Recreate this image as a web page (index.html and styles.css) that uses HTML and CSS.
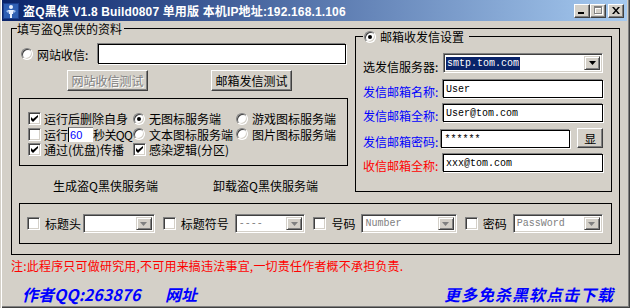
FILE: index.html
```html
<!DOCTYPE html>
<html lang="zh-CN">

<head>
    <meta charset="UTF-8">
    <title>盗Q黑侠</title>
    <link rel="stylesheet" href="styles.css">
</head>

<body>
    <div class="window">
        <div class="titlebar">
            <span class="app-icon">
                <svg width="16" height="16" viewBox="0 0 16 16">
                    <rect width="16" height="16" fill="#1b3f8f"/>
                    <rect x="1" y="1" width="14" height="14" fill="#2f5fb3"/>
                    <circle cx="8" cy="4" r="2" fill="#e8f0ff"/>
                    <path d="M5 7h6l-1 4h-1v4h-2v-4h-1z" fill="#e8f0ff"/>
                    <path d="M3 8l2-1v3zM13 8l-2-1v3z" fill="#9fc0f0"/>
                </svg>
            </span>
            <span class="title">盗Q黑侠 V1.8 Build0807 单用版 本机IP地址:192.168.1.106</span>
            <div class="title-btns">
                <span class="tbtn">
                    <svg width="8" height="7" viewBox="0 0 8 7"><rect x="0" y="5" width="6" height="2" fill="#000"/></svg>
                </span>
                <span class="tbtn">
                    <svg width="9" height="9" viewBox="0 0 9 9">
                        <path d="M1 1h8v8h-8z M2 3v5h6v-5z" fill="#fff"/>
                        <path d="M0 0h8v8h-8z M1 2v5h6v-5z" fill="#808080"/>
                    </svg>
                </span>
                <span class="tbtn close">
                    <svg width="8" height="7" viewBox="0 0 8 7">
                        <path d="M0 0h2l2 2.5 2-2.5h2l-3 3.5 3 3.5h-2l-2-2.5-2 2.5h-2l3-3.5z" fill="#000"/>
                    </svg>
                </span>
            </div>
        </div>

        <fieldset class="group main-group">
            <legend>填写盗Q黑侠的资料</legend>
            <div class="top-row">
                <div class="left-col">
                    <div class="site-row">
                        <span class="radio"></span>
                        <span class="site-label">网站收信:</span>
                        <input type="text" class="field site-url">
                    </div>
                    <div class="test-row">
                        <button class="btn" disabled>网站收信测试</button>
                        <button class="btn">邮箱发信测试</button>
                    </div>
                    <div class="box options">
                        <div class="opt-row">
                            <div class="cell c1"><span class="chk on"><svg width="7" height="7" viewBox="0 0 7 7"><path d="M0 2l2 2 5-4v2l-5 5-2-2z" fill="#000"/></svg></span>运行后删除自身</div>
                            <div class="cell c2"><span class="radio on"></span>无图标服务端</div>
                            <div class="cell"><span class="radio"></span>游戏图标服务端</div>
                        </div>
                        <div class="opt-row">
                            <div class="cell c1"><span class="chk"></span>运行<input type="text" class="secs" value="60"><span class="tight">秒关QQ</span></div>
                            <div class="cell c2"><span class="radio"></span>文本图标服务端</div>
                            <div class="cell"><span class="radio"></span>图片图标服务端</div>
                        </div>
                        <div class="opt-row">
                            <div class="cell c1"><span class="chk on"><svg width="7" height="7" viewBox="0 0 7 7"><path d="M0 2l2 2 5-4v2l-5 5-2-2z" fill="#000"/></svg></span>通过(优盘)传播</div>
                            <div class="cell c2"><span class="chk on"><svg width="7" height="7" viewBox="0 0 7 7"><path d="M0 2l2 2 5-4v2l-5 5-2-2z" fill="#000"/></svg></span>感染逻辑(分区)</div>
                        </div>
                    </div>
                    <div class="server-row">
                        <span class="make">生成盗Q黑侠服务端</span>
                        <span>卸载盗Q黑侠服务端</span>
                    </div>
                </div>

                <fieldset class="group mail-group">
                    <legend><span class="radio on"></span>邮箱收发信设置</legend>
                    <div class="mail-row first">
                        <span class="mail-label">选发信服务器:</span>
                        <div class="combo smtp">
                            <span class="combo-text"><span class="selected">smtp.tom.com</span></span>
                            <span class="drop"><svg width="7" height="4" viewBox="0 0 7 4"><path d="M0 0h7l-3.5 4z" fill="#000"/></svg></span>
                        </div>
                    </div>
                    <div class="mail-row">
                        <span class="mail-label blue">发信邮箱名称:</span>
                        <input type="text" class="field mail" value="User">
                    </div>
                    <div class="mail-row">
                        <span class="mail-label blue">发信邮箱全称:</span>
                        <input type="text" class="field mail" value="User@tom.com">
                    </div>
                    <div class="mail-row">
                        <span class="mail-label blue">发信邮箱密码:</span>
                        <input type="text" class="field mail pass" value="******">
                        <button class="btn show">显</button>
                    </div>
                    <div class="mail-row">
                        <span class="mail-label red">收信邮箱全称:</span>
                        <input type="text" class="field mail" value="xxx@tom.com">
                    </div>
                </fieldset>
            </div>

            <div class="box title-opts">
                <span class="chk"></span><span class="opt-label head">标题头</span>
                <div class="combo off w73"><span class="combo-text"></span><span class="drop"><svg width="7" height="4" viewBox="0 0 7 4"><path d="M0 0h7l-3.5 4z" fill="#808080"/></svg></span></div>
                <span class="chk"></span><span class="opt-label">标题符号</span>
                <div class="combo off w72"><span class="combo-text">----</span><span class="drop"><svg width="7" height="4" viewBox="0 0 7 4"><path d="M0 0h7l-3.5 4z" fill="#808080"/></svg></span></div>
                <span class="chk"></span><span class="opt-label">号码</span>
                <div class="combo off w97"><span class="combo-text">Number</span><span class="drop"><svg width="7" height="4" viewBox="0 0 7 4"><path d="M0 0h7l-3.5 4z" fill="#808080"/></svg></span></div>
                <span class="chk"></span><span class="opt-label">密码</span>
                <div class="combo off w92"><span class="combo-text">PassWord</span><span class="drop"><svg width="7" height="4" viewBox="0 0 7 4"><path d="M0 0h7l-3.5 4z" fill="#808080"/></svg></span></div>
            </div>
        </fieldset>

        <p class="note">注:此程序只可做研究用,不可用来搞违法事宜,一切责任作者概不承担负责.</p>

        <div class="footer">
            <span class="author">作者QQ:263876</span>
            <span class="site">网址</span>
            <span class="more">更多免杀黑软点击下载</span>
        </div>
    </div>
</body>

</html>
```

FILE: styles.css
```css
body {
    margin: 0;
    background-color: #d4d0c8;
    font-family: "Noto Sans CJK SC", sans-serif;
    font-size: 12px;
    color: #000;
}

.window {
    width: 630px;
    height: 308px;
    box-sizing: border-box;
    padding: 0 3px 3px 2px;
    background-color: #d4d0c8;
    box-shadow: inset 1px 0 #d4d0c8, inset 2px 0 #fff, inset -1px -1px #404040, inset -2px -2px #808080;
    overflow: hidden;
}

/* title bar */
.titlebar {
    height: 21px;
    display: flex;
    align-items: center;
    background: linear-gradient(to right, #0a246a, #a6caf0);
    color: white;
}

.app-icon {
    width: 16px;
    height: 16px;
    margin-left: 1px;
}

.app-icon svg {
    display: block;
}

.title {
    margin-left: 4px;
    font: bold 12px "Liberation Sans", "Noto Sans CJK SC", sans-serif;
    letter-spacing: 0.15px;
    white-space: nowrap;
}

.title-btns {
    margin-left: auto;
    margin-right: 3px;
    display: flex;
}

.tbtn {
    width: 16px;
    height: 14px;
    box-sizing: border-box;
    display: flex;
    align-items: center;
    justify-content: center;
    background-color: #d4d0c8;
    border: 1px solid;
    border-color: #fff #404040 #404040 #fff;
    box-shadow: inset -1px -1px #808080;
}

.tbtn.close {
    margin-left: 2px;
}

/* group boxes */
.group {
    margin: 0;
    padding: 0;
    border: 1px solid #000;
    min-width: 0;
}

.group legend {
    padding: 0;
    line-height: 13px;
}

.main-group {
    margin: 1px 7px 0 9px;
    padding: 0 7px 10px 7px;
}

.main-group > legend {
    margin-left: -2px;
    padding-right: 2px;
}

.top-row {
    display: flex;
    gap: 7px;
}

.left-col {
    width: 329px;
    margin-top: 9px;
}

.site-row {
    height: 20px;
    display: flex;
    align-items: center;
}

.site-row .radio {
    margin-left: 2px;
}

.site-label {
    width: 61px;
    margin-left: 4px;
}

.field {
    box-sizing: border-box;
    margin: 0;
    padding: 0 2px;
    border: 1px solid #000;
    box-shadow: -1px -1px #808080, 1px 1px #fff;
    background-color: white;
    font: 10px "Liberation Mono", monospace;
    color: #000;
    outline: none;
}

.site-url {
    width: 248px;
    height: 20px;
}

.test-row {
    margin-top: 6px;
    display: flex;
}

.btn {
    height: 21px;
    width: 81px;
    padding: 0;
    box-sizing: border-box;
    background-color: #d4d0c8;
    border: 1px solid;
    border-color: #fff #404040 #404040 #fff;
    box-shadow: inset -1px -1px #808080;
    font: 12px "Noto Sans CJK SC", sans-serif;
    color: #000;
}

.btn:disabled {
    color: #808080;
    text-shadow: 1px 1px #fff;
}

.test-row .btn:first-child {
    margin-left: 48px;
}

.test-row .btn + .btn {
    margin-left: 63px;
}

.box {
    border: 1px solid #000;
}

.options {
    margin-top: 7px;
    height: 68px;
    box-sizing: border-box;
    padding: 12px 0 0 8px;
}

.opt-row {
    height: 15.5px;
    display: flex;
    align-items: center;
}

.cell {
    display: flex;
    align-items: center;
    white-space: nowrap;
    line-height: 13px;
}

.cell.c1 {
    width: 105px;
}

.cell.c2 {
    width: 103px;
}

.cell .chk {
    margin-right: 3px;
}

.cell .radio {
    margin-right: 4px;
}

.tight {
    letter-spacing: -0.6px;
}

.secs {
    width: 25px;
    height: 15px;
    box-sizing: border-box;
    margin: 0;
    padding: 0 1px;
    border: none;
    border-left: 1px solid #000;
    border-top: 1px solid #808080;
    background-color: white;
    color: #0000ff;
    font: 11px "Liberation Sans", sans-serif;
    outline: none;
}

.server-row {
    margin-top: 13px;
    line-height: 13px;
    display: flex;
}

.server-row .make {
    margin-left: 34px;
    width: 160px;
}

/* checkbox and radio */
.chk {
    width: 13px;
    height: 13px;
    flex-shrink: 0;
    box-sizing: border-box;
    display: inline-flex;
    align-items: center;
    justify-content: center;
    background-color: white;
    border: 1px solid;
    border-color: #808080 #fff #fff #808080;
    box-shadow: inset 1px 1px #404040, inset -1px -1px #d4d0c8;
}

.radio {
    width: 12px;
    height: 12px;
    flex-shrink: 0;
    box-sizing: border-box;
    display: inline-block;
    position: relative;
    border-radius: 50%;
    background-color: white;
    border: 1px solid;
    border-color: #808080 #fff #fff #808080;
    box-shadow: inset 1px 1px #404040, inset -1px -1px #d4d0c8;
    vertical-align: middle;
}

.radio.on::after {
    content: "";
    position: absolute;
    left: 3px;
    top: 3px;
    width: 4px;
    height: 4px;
    border-radius: 50%;
    background-color: #000;
}

/* mail settings */
.mail-group {
    flex: 1;
    margin-top: -5px;
    padding: 10px 8px 14px 7px;
}

.mail-group legend {
    margin-left: 0;
    padding: 0 5px 0 1px;
    display: flex;
    align-items: center;
    gap: 4px;
}

.mail-row {
    display: flex;
    align-items: flex-end;
    margin-top: 6px;
}

.mail-row.first {
    margin-top: 0;
    margin-bottom: 7px;
}

.mail-label {
    width: 80px;
    line-height: 13px;
    white-space: nowrap;
}

.mail-label.blue {
    color: #0000ff;
}

.mail-label.red {
    color: #ff0000;
}

.mail {
    width: 160px;
    height: 18px;
}

.mail.pass {
    width: 129px;
}

.btn.show {
    width: 26px;
    height: 20px;
    margin-left: 7px;
}

/* combo boxes */
.combo {
    height: 20px;
    box-sizing: border-box;
    display: flex;
    align-items: stretch;
    background-color: white;
    border: 1px solid;
    border-color: #808080 #fff #fff #808080;
    box-shadow: inset 1px 1px #404040, inset -1px -1px #d4d0c8;
    padding: 2px;
}

.combo-text {
    flex: 1;
    display: flex;
    align-items: center;
    font: 10px "Liberation Mono", monospace;
    white-space: nowrap;
    overflow: hidden;
}

.combo .selected {
    background-color: #0a246a;
    color: white;
    line-height: 13px;
    padding: 0 1px;
}

.drop {
    width: 16px;
    box-sizing: border-box;
    display: flex;
    align-items: center;
    justify-content: center;
    background-color: #d4d0c8;
    border: 1px solid;
    border-color: #d4d0c8 #404040 #404040 #d4d0c8;
    box-shadow: inset 1px 1px #fff, inset -1px -1px #808080;
}

.smtp {
    width: 160px;
}

.combo.off .combo-text {
    color: #808080;
    padding-left: 1px;
}

.combo.off {
    height: 19px;
}

.w73 { width: 73px; }
.w72 { width: 72px; }
.w97 { width: 97px; }
.w92 { width: 92px; }

.title-opts {
    margin-top: 11px;
    height: 41px;
    box-sizing: border-box;
    padding: 0 0 0 7px;
    display: flex;
    align-items: center;
}

.title-opts .chk {
    margin-right: 5px;
}

.title-opts .combo {
    margin-left: 6px;
    margin-right: 8px;
}

.title-opts .head + .combo {
    margin-left: 2px;
}

.opt-label {
    line-height: 13px;
    white-space: nowrap;
}

/* bottom text */
.note {
    margin: 4px 0 0 9px;
    line-height: 14px;
    color: #ff0000;
    letter-spacing: 0.2px;
}

.footer {
    margin-top: 12px;
    display: flex;
    font: italic bold 16px "Noto Sans CJK SC", sans-serif;
    line-height: 18px;
    color: #0000ff;
}

.footer .author {
    margin-left: 20px;
    width: 143px;
}

.footer .more {
    margin-left: auto;
    margin-right: 13px;
    letter-spacing: 1px;
}
```
